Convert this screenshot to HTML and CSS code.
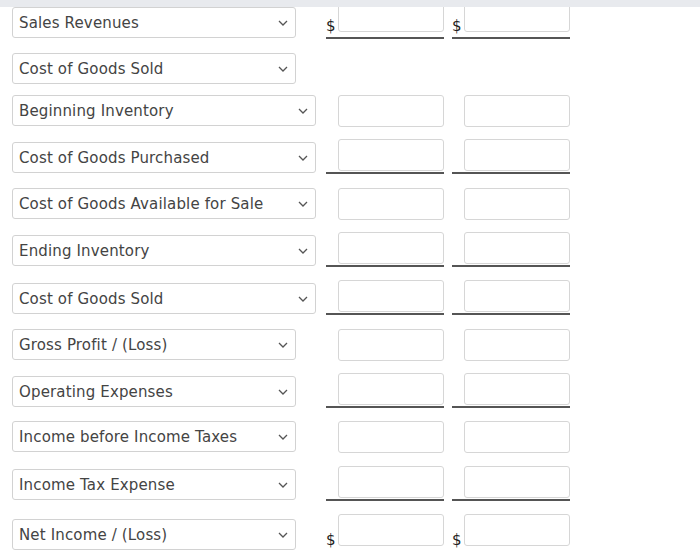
FILE: index.html
```html
<!DOCTYPE html>
<html>
<head>
<meta charset="utf-8">
<link rel="stylesheet" href="styles.css">
</head>
<body>
<div class="topbar"></div>
<div class="sheet">

  <div class="row dollar ul r1">
    <div class="col-label"><div class="select narrow off-6"><span>Sales Revenues</span><svg class="chev" viewBox="0 0 10 6"><polyline points="1,1 5,5 9,1"/></svg></div></div>
    <div class="cell line"><span class="cur">$</span><div class="box"></div></div>
    <div class="cell line"><span class="cur">$</span><div class="box"></div></div>
  </div>

  <div class="row r2">
    <div class="col-label"><div class="select narrow"><span>Cost of Goods Sold</span><svg class="chev" viewBox="0 0 10 6"><polyline points="1,1 5,5 9,1"/></svg></div></div>
  </div>

  <div class="row">
    <div class="col-label"><div class="select wide"><span>Beginning Inventory</span><svg class="chev" viewBox="0 0 10 6"><polyline points="1,1 5,5 9,1"/></svg></div></div>
    <div class="cell"><div class="box"></div></div>
    <div class="cell"><div class="box"></div></div>
  </div>

  <div class="row ul gap49">
    <div class="col-label"><div class="select wide off-3"><span>Cost of Goods Purchased</span><svg class="chev" viewBox="0 0 10 6"><polyline points="1,1 5,5 9,1"/></svg></div></div>
    <div class="cell line"><div class="box"></div></div>
    <div class="cell line"><div class="box"></div></div>
  </div>

  <div class="row">
    <div class="col-label"><div class="select wide"><span>Cost of Goods Available for Sale</span><svg class="chev" viewBox="0 0 10 6"><polyline points="1,1 5,5 9,1"/></svg></div></div>
    <div class="cell"><div class="box"></div></div>
    <div class="cell"><div class="box"></div></div>
  </div>

  <div class="row ul">
    <div class="col-label"><div class="select wide off-3"><span>Ending Inventory</span><svg class="chev" viewBox="0 0 10 6"><polyline points="1,1 5,5 9,1"/></svg></div></div>
    <div class="cell line"><div class="box"></div></div>
    <div class="cell line"><div class="box"></div></div>
  </div>

  <div class="row ul gap49">
    <div class="col-label"><div class="select wide off-3"><span>Cost of Goods Sold</span><svg class="chev" viewBox="0 0 10 6"><polyline points="1,1 5,5 9,1"/></svg></div></div>
    <div class="cell line"><div class="box"></div></div>
    <div class="cell line"><div class="box"></div></div>
  </div>

  <div class="row">
    <div class="col-label"><div class="select narrow"><span>Gross Profit / (Loss)</span><svg class="chev" viewBox="0 0 10 6"><polyline points="1,1 5,5 9,1"/></svg></div></div>
    <div class="cell"><div class="box"></div></div>
    <div class="cell"><div class="box"></div></div>
  </div>

  <div class="row ul">
    <div class="col-label"><div class="select narrow off-3"><span>Operating Expenses</span><svg class="chev" viewBox="0 0 10 6"><polyline points="1,1 5,5 9,1"/></svg></div></div>
    <div class="cell line"><div class="box"></div></div>
    <div class="cell line"><div class="box"></div></div>
  </div>

  <div class="row gap45">
    <div class="col-label"><div class="select narrow"><span>Income before Income Taxes</span><svg class="chev" viewBox="0 0 10 6"><polyline points="1,1 5,5 9,1"/></svg></div></div>
    <div class="cell"><div class="box"></div></div>
    <div class="cell"><div class="box"></div></div>
  </div>

  <div class="row ul">
    <div class="col-label"><div class="select narrow off-3"><span>Income Tax Expense</span><svg class="chev" viewBox="0 0 10 6"><polyline points="1,1 5,5 9,1"/></svg></div></div>
    <div class="cell line"><div class="box"></div></div>
    <div class="cell line"><div class="box"></div></div>
  </div>

  <div class="row dollar">
    <div class="col-label"><div class="select narrow off-5"><span>Net Income / (Loss)</span><svg class="chev" viewBox="0 0 10 6"><polyline points="1,1 5,5 9,1"/></svg></div></div>
    <div class="cell"><span class="cur">$</span><div class="box"></div></div>
    <div class="cell"><span class="cur">$</span><div class="box"></div></div>
  </div>

</div>
</body>
</html>
```

FILE: styles.css
```css
html, body {
  margin: 0;
  padding: 0;
  background: #ffffff;
  overflow: hidden;
}

body {
  font-family: "DejaVu Sans", Verdana, sans-serif;
  font-size: 15px;
  color: #444444;
  position: relative;
  width: 700px;
  height: 552px;
}

.topbar {
  position: absolute;
  left: 0;
  top: 0;
  width: 700px;
  height: 7px;
  background: #e8eaee;
  z-index: 2;
}

.sheet {
  padding-top: 0;
  padding-left: 12px;
}

.row {
  display: flex;
  align-items: flex-start;
  margin-bottom: 12px;
}

.row.ul { margin-bottom: 13px; }
.row.gap49 { margin-bottom: 14px; }
.row.gap45 { margin-bottom: 13px; }
.row.r1 { margin-bottom: 14px; }
.row.r2 { margin-bottom: 11px; }

.col-label {
  width: 304px;
  flex: none;
}

.select {
  box-sizing: border-box;
  height: 31px;
  border: 1px solid #d2d2d2;
  border-radius: 3px;
  display: flex;
  align-items: center;
  justify-content: space-between;
  padding: 0 7px 0 6px;
  background: #fff;
  white-space: nowrap;
  letter-spacing: 0.15px;
}

.select.narrow { width: 284px; }
.select.wide { width: 304px; }

.off-3 { margin-top: 3px; }
.off-5 { margin-top: 5px; }
.off-6 { margin-top: 7px; }

.chev {
  width: 10px;
  height: 6px;
  flex: none;
}

.chev polyline {
  fill: none;
  stroke: #555;
  stroke-width: 1.3;
}

.cell {
  box-sizing: border-box;
  width: 118px;
  flex: none;
  display: flex;
  align-items: flex-end;
  justify-content: flex-end;
  position: relative;
  margin-left: 10px;
}

.cell + .cell { margin-left: 8px; }

.cell.line {
  border-bottom: 2px solid #555;
  padding-bottom: 1px;
}

.dollar .cell.line { padding-bottom: 5px; }

.cur {
  margin-right: auto;
  margin-left: 0;
  color: #222;
  font-size: 15px;
  line-height: 15px;
  margin-bottom: -2px;
}

.box {
  box-sizing: border-box;
  width: 106px;
  height: 32px;
  border: 1px solid #d6d6d6;
  border-radius: 3px;
  background: #fff;
}
```
